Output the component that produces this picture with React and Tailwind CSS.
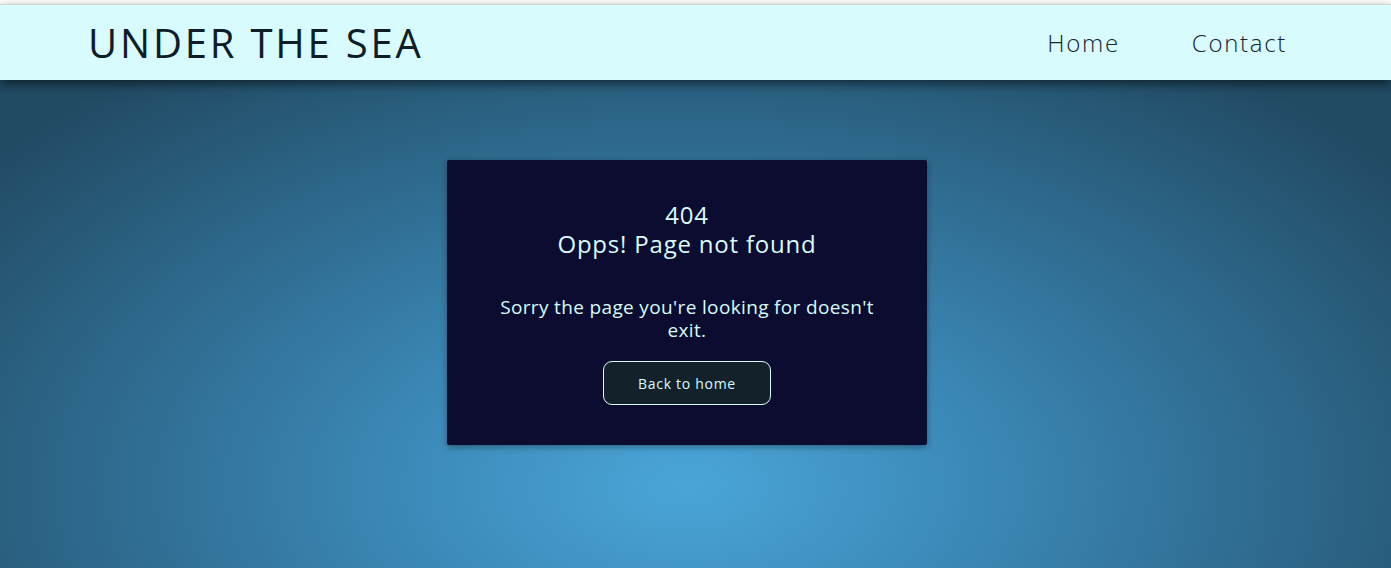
export default function App() {
  return (
    <div className="w-full h-[568px] overflow-hidden bg-white pt-[4px] font-['Open_Sans',sans-serif]">
      <div className="relative z-10 h-[76px] border-t border-[#d4d4d4] bg-[#d8fbfd] shadow-[0_4px_10px_rgba(0,0,0,0.55)]">
        <div className="w-[1375px] h-full flex items-center justify-between px-[88px]">
          <h1 className="text-[40px] font-normal text-[#0f1d29] tracking-[2.8px] leading-none">UNDER THE SEA</h1>
          <nav className="flex items-center gap-[72px] text-[24px] font-light text-[#16242f] tracking-[1.7px]">
            <a>Home</a>
            <a>Contact</a>
          </nav>
        </div>
      </div>
      <main className="h-[488px] bg-[radial-gradient(ellipse_900px_520px_at_687px_405px,#4aa6d8_0%,#3a86b4_35%,#2d6688_70%,#214a63_100%)]">
        <div className="w-[1374px] flex justify-center pt-[80px]">
          <div className="w-[480px] h-[285px] rounded-[2px] bg-[#0c0c30] shadow-[0_2px_6px_rgba(0,0,0,0.35)] flex flex-col items-center text-[#d8fbfd] pt-[40px]">
            <div className="text-[24px] font-medium leading-[29px] text-center tracking-[0.8px]">404</div>
            <h2 className="text-[24px] font-medium leading-[29px] text-center tracking-[0.8px]">Opps! Page not found</h2>
            <p className="mt-[38px] w-[400px] text-center text-[19px] font-medium leading-[23px] tracking-[0.35px]">Sorry the page you're looking for doesn't exit.</p>
            <button className="mt-[19px] w-[168px] h-[44px] rounded-[9px] border border-[#d8fbfd] bg-[#13212b] text-[14px] font-normal tracking-[0.7px] text-[#d8fbfd]">Back to home</button>
          </div>
        </div>
      </main>
    </div>
  );
}
